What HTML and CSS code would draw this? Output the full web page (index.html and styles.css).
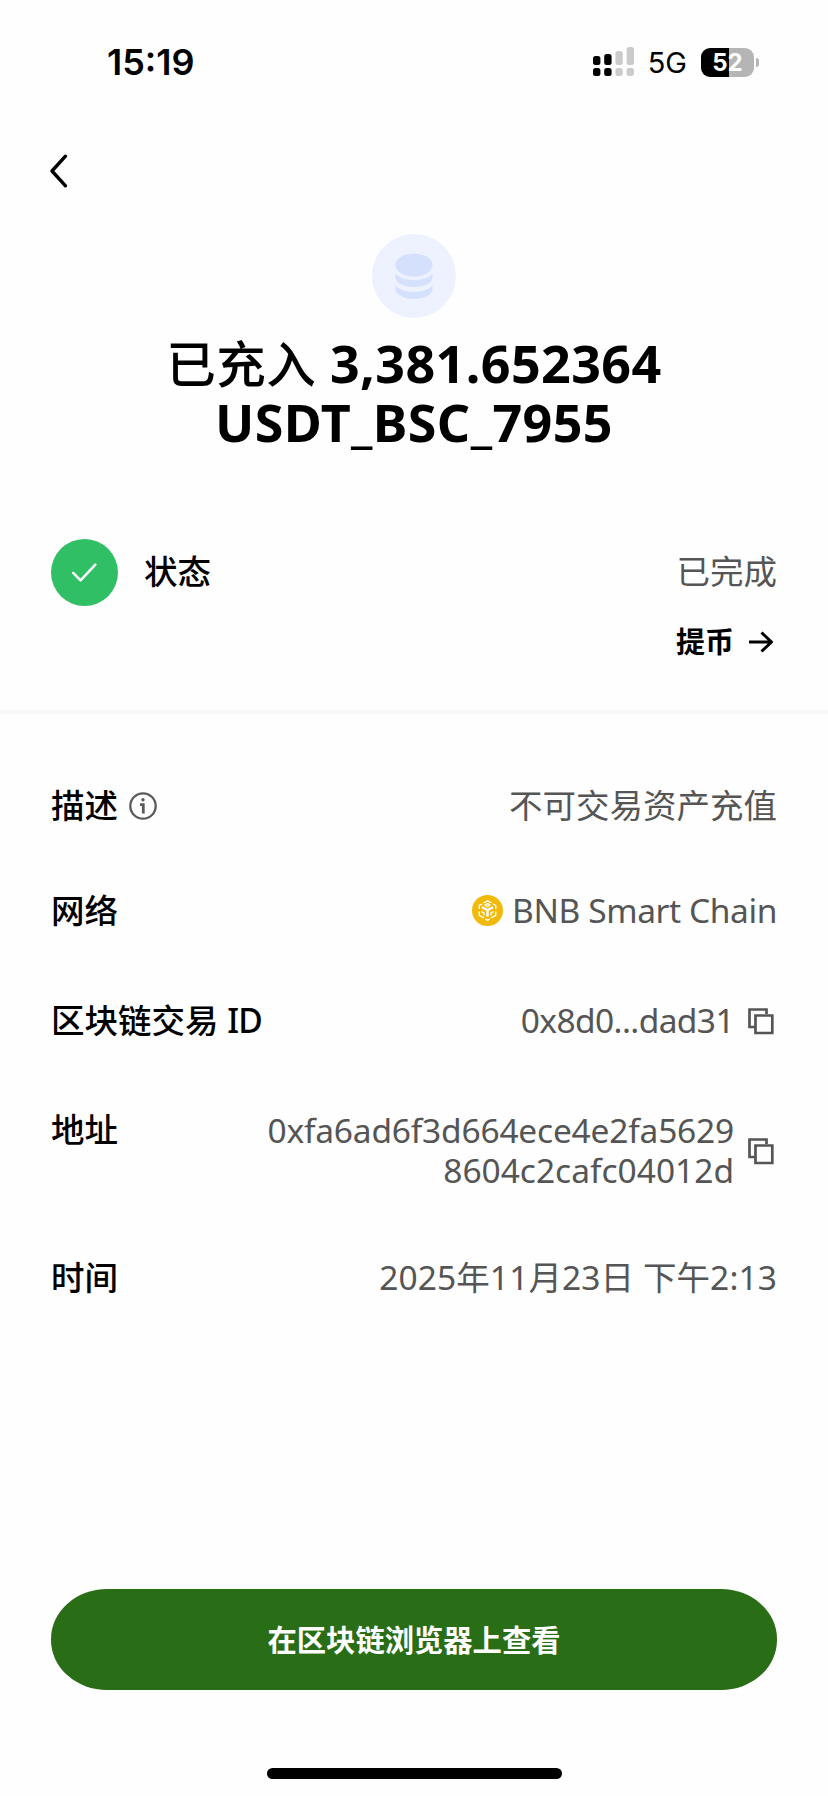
FILE: index.html
```html
<!DOCTYPE html>
<html lang="zh-CN">

<head>
    <meta charset="utf-8">
    <meta name="viewport" content="width=device-width, initial-scale=1.0">
    <title>已充入 USDT_BSC_7955</title>
    <link rel="stylesheet" href="styles.css">
</head>

<body>

    <header class="statusbar">
        <span class="clock">15:19</span>
        <div class="statusbar-right">
            <svg class="signal" width="42" height="30" viewBox="0 0 42 30">
                <g fill="#000">
                    <rect x="0" y="9" width="7.4" height="9" rx="2.5" />
                    <rect x="0" y="21" width="7.4" height="8" rx="2.5" />
                    <rect x="11.2" y="7" width="7.4" height="11" rx="2.5" />
                    <rect x="11.2" y="21" width="7.4" height="8" rx="2.5" />
                </g>
                <g fill="#cbcbcb">
                    <rect x="22.4" y="4" width="7.4" height="14" rx="2.5" />
                    <rect x="22.4" y="21" width="7.4" height="8" rx="2.5" />
                    <rect x="33.6" y="0" width="7.4" height="18" rx="2.5" />
                    <rect x="33.6" y="21" width="7.4" height="8" rx="2.5" />
                </g>
            </svg>
            <span class="network-type">5G</span>
            <div class="battery">52</div>
            <span class="battery-tip"></span>
        </div>
    </header>

    <nav>
        <svg class="back" width="20" height="36" viewBox="0 0 20 36">
            <path d="M16.5 3.2 3 18 16.5 32.8" fill="none" stroke="#000" stroke-width="3.4" stroke-linecap="round" stroke-linejoin="round" />
        </svg>
    </nav>

    <section class="hero">
        <svg width="84" height="84" viewBox="0 0 84 84">
            <circle cx="42" cy="42" r="42" fill="#edf2fe" />
            <g fill="#d5e0fc">
                <ellipse cx="42" cy="31" rx="18.5" ry="11.5" />
                <path d="M23.5 39.5C26 43 33 46 42 46S58 43 60.5 39.5V43.5C60.5 49 52 53 42 53S23.5 49 23.5 43.5Z" />
                <path d="M23.5 51.5C26 55 33 58 42 58S58 55 60.5 51.5V55C60.5 60.5 52 65 42 65S23.5 60.5 23.5 55Z" />
            </g>
        </svg>
        <h1><span class="cjk">已充入</span> 3,381.652364<br>USDT_BSC_7955</h1>
    </section>

    <section class="status">
        <div class="status-row">
            <svg class="check" width="67" height="67" viewBox="0 0 68 68">
                <circle cx="34" cy="34" r="34" fill="#30bf64" />
                <path d="M22.5 34.5 30 42 45 26" fill="none" stroke="#fff" stroke-width="2.5" stroke-linecap="round" stroke-linejoin="round" />
            </svg>
            <span class="label">状态</span>
            <span class="value">已完成</span>
        </div>
        <a class="withdraw">提币
            <svg width="26" height="24" viewBox="0 0 26 24">
                <path d="M1 12H23.5M13.5 2.5 23.5 12 13.5 21.5" fill="none" stroke="#000" stroke-width="3" stroke-linejoin="round" />
            </svg>
        </a>
    </section>

    <section class="details">
        <div class="row row-desc">
            <span class="label">描述</span>
            <svg class="info" width="28" height="28" viewBox="0 0 28 28">
                <circle cx="14" cy="14" r="12.7" fill="none" stroke="#5a5a5a" stroke-width="2.3" />
                <circle cx="14" cy="7.8" r="1.7" fill="#5a5a5a" />
                <path d="M11 12.7H14.3V21.5" fill="none" stroke="#5a5a5a" stroke-width="2.8" />
            </svg>
            <span class="value">不可交易资产充值</span>
        </div>
        <div class="row row-network">
            <span class="label">网络</span>
            <span class="value chain">
                <svg width="31" height="31" viewBox="0 0 31 31">
                    <circle cx="15.5" cy="15.5" r="15.5" fill="#f0b90b" />
                    <g fill="none" stroke="#fff" stroke-width="1.4" stroke-linejoin="round">
                        <path d="M11.5 8 15.5 5.8 19.5 8M7.3 14V10.4L10 9M23.7 14V10.4L21 9M7.3 16.5V20.3L12 23M23.7 16.5V20.3L19 23M13.3 24 15.5 25.3 17.7 24" />
                        <path d="M12.8 10 15.5 8.6 18.2 10 15.5 11.5ZM9.5 16.5 12 18.2V20.5M21.5 16.5 19 18.2V20.5" />
                        <path d="M10 12.2 15.5 15 21 12.2M15.5 15V21.5" stroke-width="2.4" />
                    </g>
                </svg>
                <span>BNB Smart Chain</span>
            </span>
        </div>
        <div class="row row-tx">
            <span class="label">区块链交易 <span class="latin">ID</span></span>
            <span class="value tx">0x8d0...dad31</span>
            <svg class="copy" width="26" height="27" viewBox="0 0 26 27">
                <path d="M6.5 19H1.5V1.5H18.5V6M7.5 7.5H24.3V25H7.5Z" fill="none" stroke="#555" stroke-width="2.7" />
            </svg>
        </div>
        <div class="row row-address">
            <span class="label">地址</span>
            <span class="value"><span class="address-start">0xfa6ad6f3d664ece4e2fa5629</span><br>8604c2cafc04012d</span>
            <svg class="copy" width="26" height="27" viewBox="0 0 26 27">
                <path d="M6.5 19H1.5V1.5H18.5V6M7.5 7.5H24.3V25H7.5Z" fill="none" stroke="#555" stroke-width="2.7" />
            </svg>
        </div>
        <div class="row row-time">
            <span class="label">时间</span>
            <span class="value time">2025年11月23日 下午2:13</span>
        </div>
    </section>

    <footer>
        <button class="explorer">在区块链浏览器上查看</button>
        <div class="home-bar"></div>
    </footer>

</body>

</html>
```
FILE: styles.css
```css
* {
    box-sizing: border-box;
}

body {
    margin: 0;
    height: 1796px;
    display: flex;
    flex-direction: column;
    background-color: #fefefe;
    color: #000;
    font-family: 'Noto Sans', 'Noto Sans CJK SC', sans-serif;
    overflow: hidden;
}

svg {
    display: block;
    flex-shrink: 0;
}

.statusbar {
    height: 124px;
    padding: 0 69px 0 107px;
    display: flex;
    align-items: center;
    justify-content: space-between;
    font-family: 'Inter', sans-serif;
}

.clock {
    font-size: 36px;
    font-weight: 600;
}

.statusbar-right {
    display: flex;
    align-items: center;
}

.network-type {
    margin: 0 14px 0 13px;
    font-size: 29px;
}

.battery {
    width: 53px;
    height: 29px;
    border-radius: 9px;
    background: linear-gradient(to right, #000 28px, #b5b5b5 28px);
    color: #fff;
    font-size: 24px;
    font-weight: 700;
    line-height: 29px;
    text-align: center;
}

.battery-tip {
    width: 3px;
    height: 9px;
    margin-left: 2px;
    border-radius: 0 3px 3px 0;
    background-color: #b5b5b5;
}

nav {
    height: 110px;
    padding: 29px 0 0 49px;
}

.hero {
    height: 304px;
    display: flex;
    flex-direction: column;
    align-items: center;
}

h1 {
    margin: 16px 0 0;
    font-size: 52px;
    font-weight: 700;
    line-height: 58px;
    letter-spacing: 0.4px;
    text-align: center;
    white-space: nowrap;
}

.cjk {
    font-size: 49.5px;
    font-weight: 500;
}

.status {
    height: 176px;
    padding: 0 51px;
    border-bottom: 4px solid #f7f7f7;
}

.status-row {
    display: flex;
    align-items: center;
    height: 68px;
}

.label {
    margin-top: -2px;
    font-size: 33.5px;
    font-weight: 500;
    line-height: 40px;
    white-space: nowrap;
}

.check + .label {
    margin-left: 26px;
}

.value {
    margin-top: -2px;
    margin-left: auto;
    color: #555;
    font-size: 33.5px;
    line-height: 40px;
    text-align: right;
    white-space: nowrap;
}

.withdraw {
    display: flex;
    align-items: center;
    justify-content: flex-end;
    gap: 14px;
    margin-top: 16px;
    padding-right: 3px;
    font-size: 29px;
    font-weight: 700;
    line-height: 40px;
}

.details {
    padding: 72px 51px 0;
}

.row {
    display: flex;
    align-items: center;
    height: 40px;
}

.info {
    margin-left: 11px;
}

.row-network {
    margin-top: 65px;
}

.chain {
    display: flex;
    align-items: center;
    gap: 9px;
    letter-spacing: -0.4px;
}

.row-tx,
.row-address {
    margin-top: 70px;
}

.latin {
    letter-spacing: -0.8px;
}

.tx {
    letter-spacing: -0.6px;
}

.address-start {
    letter-spacing: -0.2px;
}

.copy {
    margin: 0 3px 0 14px;
}

.row-address {
    height: 80px;
}

.row-address .label {
    align-self: flex-start;
}

.row-time {
    margin-top: 67px;
}

.time {
    letter-spacing: 0.1px;
}

footer {
    margin-top: auto;
    padding: 0 51px 17px;
    display: flex;
    flex-direction: column;
    align-items: center;
    gap: 78px;
}

.explorer {
    width: 100%;
    height: 101px;
    padding: 0 0 2px;
    border: 0;
    border-radius: 56px / 50px;
    background-color: #2a6d17;
    color: #fff;
    font-family: inherit;
    font-size: 29.3px;
    font-weight: 700;
}

.home-bar {
    width: 295px;
    height: 11px;
    border-radius: 6px;
    background-color: #000;
}
```
